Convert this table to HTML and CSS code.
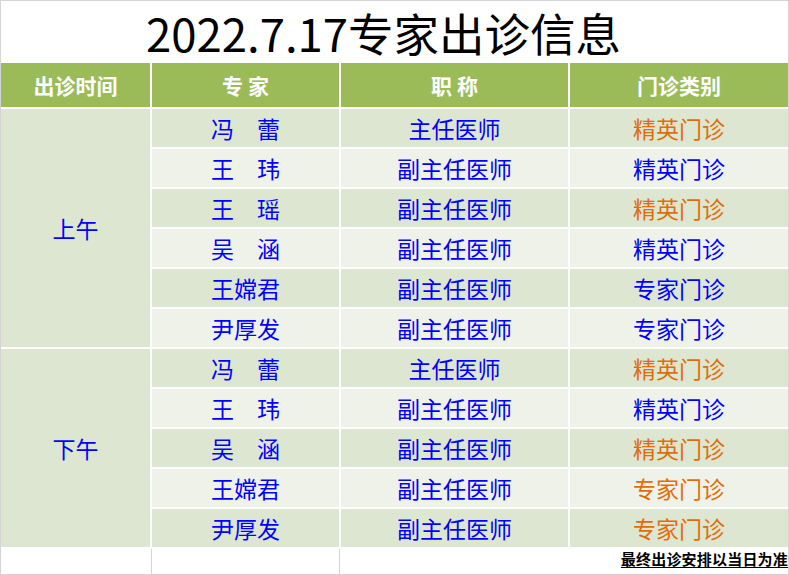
FILE: index.html
```html
<!DOCTYPE html>
<html lang="zh-CN">
<head>
<meta charset="utf-8">
<title>2022.7.17专家出诊信息</title>
<link rel="stylesheet" href="styles.css">
</head>
<body>
<div class="sheet">
  <div class="title">2022.7.17专家出诊信息</div>
  <div class="grid">
    <div class="head">出诊时间</div>
    <div class="head">专 家</div>
    <div class="head">职 称</div>
    <div class="head">门诊类别</div>

    <div class="period am">上午</div>
    <div class="cell dark">冯　蕾</div><div class="cell dark">主任医师</div><div class="cell dark orange">精英门诊</div>
    <div class="cell light">王　玮</div><div class="cell light">副主任医师</div><div class="cell light">精英门诊</div>
    <div class="cell dark">王　瑶</div><div class="cell dark">副主任医师</div><div class="cell dark orange">精英门诊</div>
    <div class="cell light">吴　涵</div><div class="cell light">副主任医师</div><div class="cell light">精英门诊</div>
    <div class="cell dark">王嫦君</div><div class="cell dark">副主任医师</div><div class="cell dark">专家门诊</div>
    <div class="cell light">尹厚发</div><div class="cell light">副主任医师</div><div class="cell light">专家门诊</div>

    <div class="period pm">下午</div>
    <div class="cell dark">冯　蕾</div><div class="cell dark">主任医师</div><div class="cell dark orange">精英门诊</div>
    <div class="cell light">王　玮</div><div class="cell light">副主任医师</div><div class="cell light">精英门诊</div>
    <div class="cell dark">吴　涵</div><div class="cell dark">副主任医师</div><div class="cell dark orange">精英门诊</div>
    <div class="cell light">王嫦君</div><div class="cell light">副主任医师</div><div class="cell light orange">专家门诊</div>
    <div class="cell dark">尹厚发</div><div class="cell dark">副主任医师</div><div class="cell dark orange">专家门诊</div>

    <div class="footer">
      <div class="foot-a"></div>
      <div class="foot-b"></div>
      <div class="foot-c"><span class="note">最终出诊安排以当日为准</span></div>
    </div>
  </div>
</div>
</body>
</html>
```

FILE: styles.css
```css
html, body {
  margin: 0;
  padding: 0;
  background: #ffffff;
}

.sheet {
  width: 789px;
  height: 575px;
  box-sizing: border-box;
  border: 1px solid #d4d4d4;
  font-family: "Noto Sans CJK SC", "Noto Sans", sans-serif;
  background: #ffffff;
}

.title {
  height: 62px;
  box-sizing: border-box;
  padding-left: 145px;
  font-size: 45.5px;
  line-height: 62px;
  color: #000000;
  white-space: nowrap;
}

.grid {
  display: grid;
  grid-template-columns: 149px 187px 227px 218px;
  grid-template-rows: 44px repeat(11, 38px) 25px;
  column-gap: 2px;
  row-gap: 2px;
}

.head {
  background: #9bbb59;
  color: #ffffff;
  font-weight: bold;
  font-size: 21px;
  display: flex;
  align-items: center;
  justify-content: center;
  white-space: pre;
}

.period {
  background: #dde6d1;
  color: #0000ff;
  font-size: 23px;
  display: flex;
  align-items: center;
  justify-content: center;
}

.am {
  grid-row: span 6;
}

.pm {
  grid-row: span 5;
}

.cell {
  color: #0000ff;
  font-size: 23px;
  display: flex;
  align-items: center;
  justify-content: center;
  white-space: pre;
}

.dark {
  background: #dde6d1;
}

.light {
  background: #eef2e8;
}

.orange {
  color: #e36c0a;
}

.footer {
  grid-column: 1 / -1;
  display: grid;
  grid-template-columns: 151px 188px 1fr;
}

.foot-a,
.foot-b {
  border-right: 1px solid #d4d4d4;
}

.foot-c {
  display: flex;
  align-items: flex-start;
  justify-content: flex-end;
}

.note {
  display: block;
  font-size: 15px;
  font-weight: bold;
  color: #000000;
  line-height: 17px;
  margin-top: 1px;
  border-bottom: 1px solid #000000;
  letter-spacing: 0.2px;
  white-space: nowrap;
}
```
